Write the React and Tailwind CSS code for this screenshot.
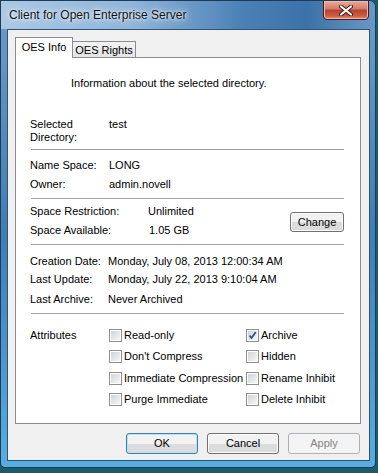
import React from 'react';

const FONT = "font-['Liberation_Sans',Arial,sans-serif]";

function Separator() {
  return <div className="ml-px mr-[16px] border-t border-[#a0a0a0]" />;
}

function Row({ label, value, valueOffset = 'w-[79px]', className = '' }) {
  return (
    <div className={`flex h-[16px] items-center ${className}`}>
      <span className={`${valueOffset} shrink-0`}>{label}</span>
      <span>{value}</span>
    </div>
  );
}

function CheckBox({ checked }) {
  return (
    <div className="w-[13px] h-[13px] shrink-0 border border-[#8e8f8f] bg-white p-px">
      <div className="relative w-full h-full bg-gradient-to-br from-[#d0d3d8] to-[#f7f7f7]">
        {checked && (
          <svg width="11" height="11" viewBox="0 0 11 11" className="absolute -left-px -top-px">
            <path d="M2.5 5.5 L4.5 8 L8.8 2" fill="none" stroke="#3d4f8a" strokeWidth="1.8" />
          </svg>
        )}
      </div>
    </div>
  );
}

function Check({ label, checked }) {
  return (
    <div className="flex items-center gap-[2px] h-[16px]">
      <CheckBox checked={checked} />
      <span>{label}</span>
    </div>
  );
}

function Button({ children, variant }) {
  const styles = {
    ok: 'border-[#3c7fb1] shadow-[inset_0_0_0_1px_#b6e3f9] text-black',
    normal: 'border-[#707070] shadow-[inset_0_0_0_1px_#fcfcfc] text-black',
    disabled: 'border-[#adb2b5] bg-none bg-[#f4f4f4] text-[#838383]',
  };
  return (
    <div
      className={`w-[72px] h-[21px] rounded-[3px] border flex items-center justify-center bg-gradient-to-b from-[#f2f2f2] from-50% to-[#dcdcdc] to-50% ${styles[variant]}`}
    >
      {children}
    </div>
  );
}

export default function App() {
  return (
    <div className={`w-[378px] h-[473px] bg-[#1e5b69] overflow-hidden text-[11px] text-black ${FONT}`}>
      <div className="w-[376px] h-[468px] flex flex-col border border-[#1d3a57] rounded-tr-[7px] rounded-b-[5px] bg-gradient-to-b from-[#6f9cc9] via-[#3f7db5] to-[#57aee1] overflow-hidden">
        {/* Title bar */}
        <div className="h-[28px] shrink-0 flex items-start justify-between bg-[linear-gradient(90deg,#aac8e5_0%,#8fb5da_35%,#4a80b5_65%,#3b72a9_82%,#6a98c6_100%)]">
          <span className="self-center pl-[8px] text-[12px] text-[#111] [text-shadow:0_0_8px_#ffffff,0_0_3px_#ffffff]">
            Client for Open Enterprise Server
          </span>
          <div className="relative -top-px mr-[6px] w-[46px] h-[20px] rounded-b-[4px] border border-[#4e1a12] bg-[linear-gradient(180deg,#e8ab9c_0%,#d37a66_45%,#b9412c_50%,#c95a43_80%,#de8a6f_100%)] flex items-center justify-center shadow-[inset_0_0_0_1px_#f0b9aa]">
            <svg width="14" height="11" viewBox="0 0 14 11">
              <path d="M2 1.5 L12 9.5 M12 1.5 L2 9.5" stroke="#3a1a15" strokeWidth="4" strokeLinecap="round" />
              <path d="M2 1.5 L12 9.5 M12 1.5 L2 9.5" stroke="#ffffff" strokeWidth="2.2" strokeLinecap="round" />
            </svg>
          </div>
        </div>

        {/* Body */}
        <div className="flex pl-[6px] pr-[5px]">
          <div className="w-[363px] h-[432px] border border-[#34536f] bg-[#f0f0f0] flex flex-col pt-[7px] pl-[7px]">
            {/* Tabs */}
            <div className="flex items-end h-[21px]">
              <div className="relative z-10 w-[58px] h-[21px] border border-b-0 border-[#898c95] bg-white flex items-center justify-center pb-[2px]">
                OES Info
              </div>
              <div className="w-[63px] h-[17px] border border-l-0 border-b-0 border-[#898c95] bg-gradient-to-b from-[#f3f3f3] to-[#e3e3e3] flex items-center justify-center">
                OES Rights
              </div>
            </div>

            {/* Panel */}
            <div className="-mt-px w-[346px] h-[367px] border border-[#898c95] bg-white pl-[14px] flex flex-col">
              <div className="mt-[17px] h-[16px] flex items-center pl-[41px]">
                Information about the selected directory.
              </div>

              <div className="mt-[27px] flex leading-[13px]">
                <span className="w-[79px] shrink-0">
                  Selected
                  <br />
                  Directory:
                </span>
                <span>test</span>
              </div>

              <div className="mt-[5px]">
                <Separator />
              </div>

              <Row label="Name Space:" value="LONG" className="mt-[7px]" />
              <Row label="Owner:" value="admin.novell" className="mt-[3px]" />

              <div className="mt-[6px]">
                <Separator />
              </div>

              <div className="mt-[4px] flex">
                <div className="w-[260px] flex flex-col gap-[3px]">
                  <Row label="Space Restriction:" value="Unlimited" valueOffset="w-[118px]" />
                  <Row label="Space Available:" value="1.05 GB" valueOffset="w-[119px]" />
                </div>
                <div className="mt-[9px] w-[54px] h-[20px] rounded-[3px] border border-[#707070] shadow-[inset_0_0_0_1px_#fcfcfc] bg-gradient-to-b from-[#f2f2f2] from-50% to-[#dcdcdc] to-50% flex items-center justify-center">
                  Change
                </div>
              </div>

              <div className="mt-[6px]">
                <Separator />
              </div>

              <Row label="Creation Date:" value="Monday, July 08, 2013 12:00:34 AM" valueOffset="w-[78px]" className="mt-[8px]" />
              <Row label="Last Update:" value="Monday, July 22, 2013 9:10:04 AM" valueOffset="w-[78px]" className="mt-[2px]" />
              <Row label="Last Archive:" value="Never Archived" valueOffset="w-[78px]" className="mt-[4px]" />

              <div className="mt-[6px]">
                <Separator />
              </div>

              <div className="mt-[13px] flex">
                <span className="w-[79px] shrink-0 h-[16px] flex items-center">Attributes</span>
                <div className="grid grid-cols-[137px_auto] gap-y-[5.5px]">
                  <Check label="Read-only" />
                  <Check label="Archive" checked />
                  <Check label="Don't Compress" />
                  <Check label="Hidden" />
                  <Check label="Immediate Compression" />
                  <Check label="Rename Inhibit" />
                  <Check label="Purge Immediate" />
                  <Check label="Delete Inhibit" />
                </div>
              </div>
            </div>

            {/* Buttons */}
            <div className="mt-[9px] flex gap-[9px] pl-[111px]">
              <Button variant="ok">OK</Button>
              <Button variant="normal">Cancel</Button>
              <Button variant="disabled">Apply</Button>
            </div>
          </div>
        </div>
      </div>
    </div>
  );
}
